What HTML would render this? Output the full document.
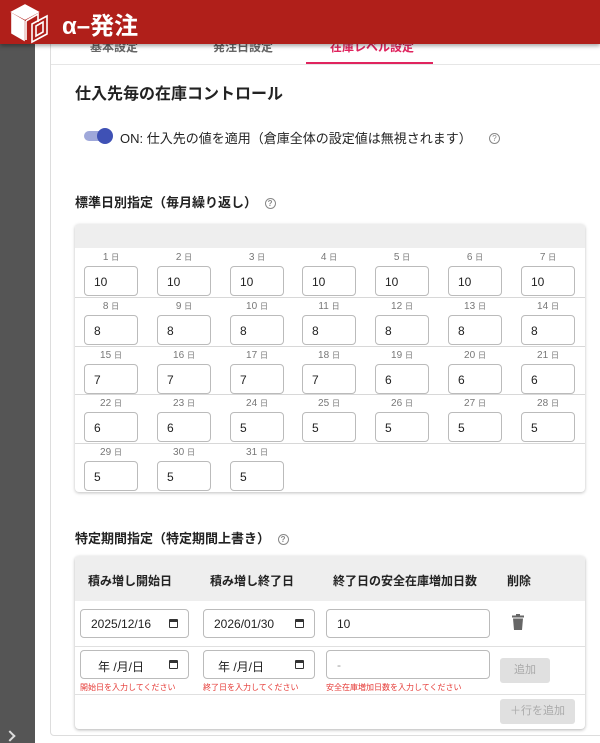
<!DOCTYPE html>
<html><head><meta charset="utf-8"><style>
*{box-sizing:border-box;margin:0;padding:0}
body{width:600px;height:743px;overflow:hidden;background:#fff;font-family:"Liberation Sans","Noto Sans CJK JP",sans-serif;color:#222;position:relative}
.a{position:absolute}
.side{left:0;top:0;width:35px;height:743px;background:#555}
.card{left:50px;top:30px;width:600px;height:706px;border:1px solid #ddd;border-radius:4px;background:#fff}
.hdr{left:0;top:0;width:600px;height:44px;background:#b01f1a;box-shadow:0 2px 4px rgba(0,0,0,.35);z-index:5}
.tab{top:38px;font-size:12px;color:#666;font-weight:bold}
.grid{left:75px;top:224px;width:510px;height:268px;border-radius:4px;box-shadow:0 1px 3px rgba(0,0,0,.25);background:#fff;overflow:hidden}
.gh{left:0;top:0;width:510px;height:24px;background:#eee}
.ln{position:absolute;left:0;width:510px;height:1px;background:#d8d8d8}
.lbl{font-size:10px;color:#777;width:54px;text-align:center}
.lbl small{font-size:8px}
.inp{width:54px;height:30px;border:1px solid #bbb;border-radius:4px;font-size:12px;padding:8px 0 0 9px;background:#fff}
.tb{left:75px;top:556px;width:510px;height:173px;border-radius:4px;box-shadow:0 1px 3px rgba(0,0,0,.3);background:#fff;overflow:hidden}
.th{font-size:12px;font-weight:bold;top:16px}
.fi{height:29px;border:1px solid #bbb;border-radius:4px;font-size:12px;padding:7px 0 0 10px;background:#fff}
.cal{position:absolute;right:10px;top:9px;width:9px;height:9px;border:1.5px solid #333;border-top-width:3px;border-radius:1px}
.err{font-size:8px;color:#e53935}
.btn{background:#e0e0e0;color:#aaa;border-radius:3px;font-size:11px;text-align:center}
.q{display:inline-block;width:11px;height:11px;border:1px solid #888;border-radius:50%;font-size:8px;line-height:9px;text-align:center;color:#888;vertical-align:middle}
</style></head><body>
<div class="a side"></div>
<div class="a" style="left:6px;top:732px;width:8px;height:8px;border-right:2px solid #ddd;border-top:2px solid #ddd;transform:rotate(45deg)"></div>
<div class="a card"></div>
<div class="a tab" style="left:90px">基本設定</div>
<div class="a tab" style="left:213px">発注日設定</div>
<div class="a tab" style="left:330px;color:#e0245e">在庫レベル設定</div>
<div class="a" style="left:51px;top:64px;width:549px;height:1px;background:#e6e6e6"></div>
<div class="a" style="left:306px;top:62px;width:127px;height:2px;background:#e0245e"></div>
<div class="a hdr">
<svg class="a" style="left:10px;top:2px" width="40" height="42" viewBox="0 0 40 42" fill="none" stroke="#fff" stroke-width="1.6"><path d="M2 10 L15 3 L28 10 L15 17 Z" fill="#fff"/><path d="M2 12 L14 19 L14 38 L2 31 Z" fill="#fff"/><path d="M16 19 L28 12 L28 20" /><path d="M16 19 L16 38"/><path d="M22 22 L37 14 L37 32 L22 40 Z"/><path d="M26 24 L33 20 L33 30 L26 34 Z"/></svg>
<div class="a" style="left:62px;top:6px;font-size:24px;font-weight:bold;color:#fff">α–発注</div>
</div>
<div class="a" style="left:75px;top:80px;font-size:16px;font-weight:bold">仕入先毎の在庫コントロール</div>
<div class="a" style="left:84px;top:131px;width:28px;height:10px;border-radius:5px;background:#9fa8da"></div>
<div class="a" style="left:97px;top:128px;width:16px;height:16px;border-radius:50%;background:#3f51b5"></div>
<div class="a" style="left:120px;top:128px;font-size:13px">ON: 仕入先の値を適用（倉庫全体の設定値は無視されます）</div>
<div class="a" style="left:489px;top:130px"><span class="q">?</span></div>
<div class="a" style="left:75px;top:192px;font-size:13px;font-weight:bold">標準日別指定（毎月繰り返し） <span class="q" style="margin-left:4px">?</span></div>
<div class="a grid"><div class="a gh"></div>
<div class="ln" style="top:73px"></div>
<div class="ln" style="top:122px"></div>
<div class="ln" style="top:170px"></div>
<div class="ln" style="top:219px"></div>
<div id="g"></div>
</div>
<script>
var v=[10,10,10,10,10,10,10,8,8,8,8,8,8,8,7,7,7,7,6,6,6,6,6,5,5,5,5,5,5,5,5],h='';
for(var i=0;i<31;i++){var r=Math.floor(i/7),c=i%7,x=Math.round(9+c*72.8),y=Math.round(24+r*48.8);
h+='<div class="a lbl" style="left:'+x+'px;top:'+(y+4)+'px">'+(i+1)+' <small>日</small></div>';
h+='<div class="a inp" style="left:'+x+'px;top:'+(y+18)+'px">'+v[i]+'</div>';}
document.getElementById('g').innerHTML=h;
</script>
<div class="a" style="left:75px;top:528px;font-size:13px;font-weight:bold">特定期間指定（特定期間上書き） <span class="q" style="margin-left:4px">?</span></div>
<div class="a tb">
<div class="a" style="left:0;top:0;width:510px;height:45px;background:#eee"></div>
<div class="a th" style="left:13px">積み増し開始日</div>
<div class="a th" style="left:135px">積み増し終了日</div>
<div class="a th" style="left:258px">終了日の安全在庫増加日数</div>
<div class="a th" style="left:432px">削除</div>
<div class="a" style="left:0;top:90px;width:510px;height:1px;background:#e0e0e0"></div>
<div class="a" style="left:0;top:138px;width:510px;height:1px;background:#e0e0e0"></div>
<div class="a fi" style="left:5px;top:53px;width:109px">2025/12/16<span class="cal"></span></div>
<div class="a fi" style="left:128px;top:53px;width:112px">2026/01/30<span class="cal"></span></div>
<div class="a fi" style="left:251px;top:53px;width:164px">10</div>
<svg class="a" style="left:437px;top:58px" width="12" height="16" viewBox="0 0 12 16"><rect x="0" y="1.5" width="12" height="2" fill="#666"/><rect x="4" y="0" width="4" height="2" fill="#666"/><path d="M1 4.5 H11 L10 16 H2 Z" fill="#666"/></svg>
<div class="a fi" style="left:5px;top:94px;width:109px;padding-left:17px">年 /月/日<span class="cal"></span></div>
<div class="a fi" style="left:128px;top:94px;width:112px;padding-left:14px">年 /月/日<span class="cal"></span></div>
<div class="a fi" style="left:251px;top:94px;width:164px;color:#999">-</div>
<div class="a err" style="left:5px;top:126px">開始日を入力してください</div>
<div class="a err" style="left:128px;top:126px">終了日を入力してください</div>
<div class="a err" style="left:251px;top:126px">安全在庫増加日数を入力してください</div>
<div class="a btn" style="left:425px;top:102px;width:50px;height:25px;line-height:25px">追加</div>
<div class="a btn" style="left:425px;top:143px;width:75px;height:25px;line-height:25px">＋行を追加</div>
</div>
</body></html>
